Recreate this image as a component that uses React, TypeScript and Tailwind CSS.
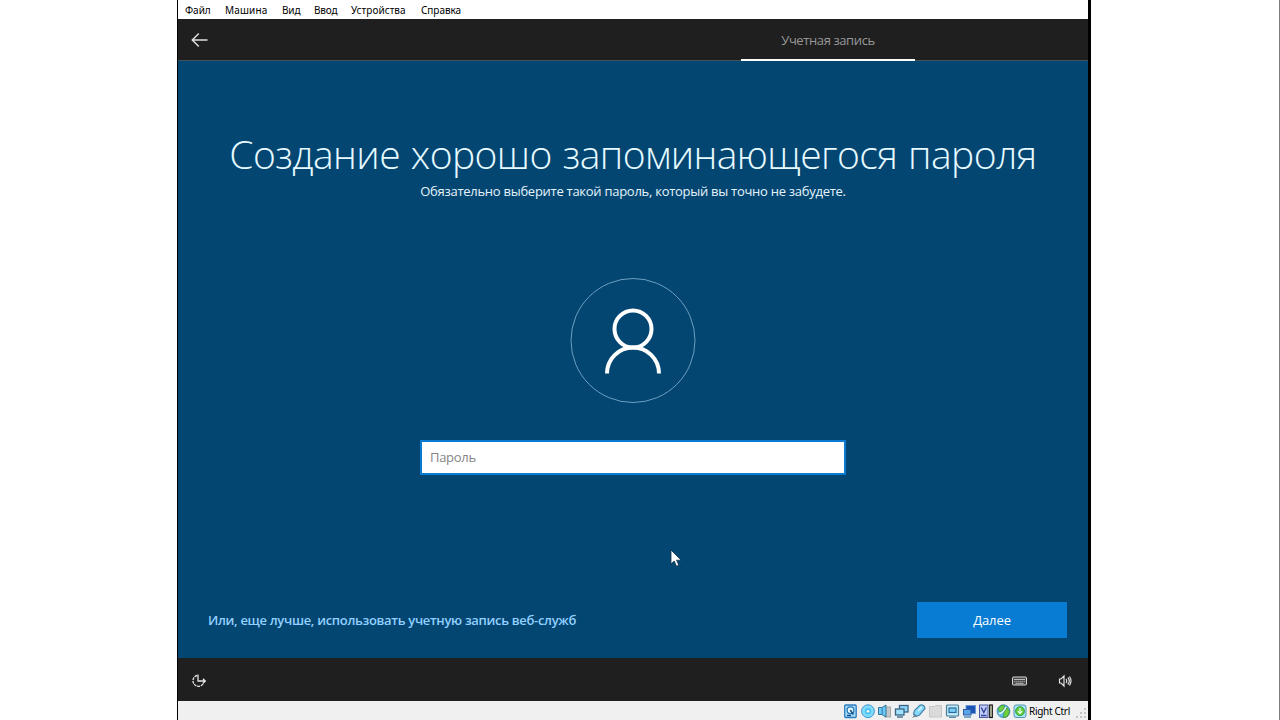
import React from "react";

const menu = [
  { label: "Файл", cls: "ml-[7px] w-[40px] tracking-[-0.05px]" },
  { label: "Машина", cls: "w-[57px] tracking-[0.15px]" },
  { label: "Вид", cls: "w-[32px] tracking-[-0.15px]" },
  { label: "Ввод", cls: "w-[37px] tracking-[-0.15px]" },
  { label: "Устройства", cls: "w-[70px] tracking-[0.05px]" },
  { label: "Справка", cls: "w-[50px] tracking-[-0.05px]" },
];

function StatusIcon({ children }: { children: React.ReactNode }) {
  return (
    <svg className="h-4 w-[17px] shrink-0" viewBox="0 0 17 16" fill="none">
      {children}
    </svg>
  );
}

function StatusBar() {
  return (
    <footer className="flex h-[19px] shrink-0 items-center bg-[#f0f0f0] pl-[664px]">
      <StatusIcon>
        <rect x="2.7" y="2" width="11.5" height="12.5" rx="1" fill="#a6dcf8" stroke="#2b7cc0" strokeWidth="1.3" />
        <circle cx="8.5" cy="7.2" r="3.4" fill="#e5f9ff" stroke="#2478b8" strokeWidth="1.3" />
        <path d="M8.3 7l3 4.5M5 12.5h4" stroke="#184a88" strokeWidth="1.5" />
      </StatusIcon>
      <StatusIcon>
        <circle cx="9" cy="8.2" r="6.4" fill="#7fdcfc" stroke="#4496cc" />
        <circle cx="9" cy="8.2" r="3.2" fill="#4fc0f0" />
        <circle cx="9" cy="8.2" r="1.3" fill="#fff" />
      </StatusIcon>
      <StatusIcon>
        <rect x="9" y="4" width="5.5" height="10" fill="#c4c6c8" stroke="#a8a8a8" />
        <path d="M2.5 4.5h3.5l4-2.500v12l-4-2.500H2.500z" fill="#6cc8f4" stroke="#35769f" />
        <path d="M6.200 5v6.500" stroke="#2e7db0" />
      </StatusIcon>
      <StatusIcon>
        <rect x="6.5" y="2.5" width="8.5" height="6.5" fill="#8fd8fa" stroke="#3a6486" strokeWidth="1.3" />
        <rect x="2.5" y="6" width="8.5" height="6" fill="#9fe2fd" stroke="#3a6486" strokeWidth="1.3" />
        <path d="M4 14h6" stroke="#4c7794" strokeWidth="1.5" />
      </StatusIcon>
      <StatusIcon>
        <path d="M3.500 11l1-3.500 5.500-5.500q4.500-.5 5 3.500L9.500 12 6 13.500z" fill="#84dafb" stroke="#4c86ae" strokeWidth="1.2" />
        <path d="M8 8l4-4" stroke="#e0f7ff" strokeWidth="1.3" />
        <path d="M2 15l3-4 2 2z" fill="#68818f" />
      </StatusIcon>
      <StatusIcon>
        <path d="M2.5 3.5h5l1-1h6V14h-12z" fill="#dadada" stroke="#c6c6c6" />
      </StatusIcon>
      <StatusIcon>
        <rect x="2.5" y="2" width="12" height="11" rx="1" fill="#bfecfd" stroke="#4c7c96" strokeWidth="1.2" />
        <rect x="5" y="5" width="7" height="4.5" fill="#7bcff5" stroke="#286c9c" strokeWidth="1.2" />
        <path d="M5 14.300h7" stroke="#4c829f" strokeWidth="1.2" />
      </StatusIcon>
      <StatusIcon>
        <rect x="5" y="2.5" width="9.5" height="8" fill="#1e54b8" stroke="#6f9bd2" />
        <rect x="2.5" y="6.5" width="7.5" height="5.5" fill="#5aa5ea" stroke="#2b5ca6" />
        <path d="M3 14h7" stroke="#4f91bd" strokeWidth="1.5" />
      </StatusIcon>
      <StatusIcon>
        <rect x="1.5" y="2" width="8.5" height="12.5" fill="#c0ccf6" stroke="#4b58a4" />
        <path d="M3.300 4.500l2.500 5 2.500-5M3 12.500h5.500" stroke="#34429a" strokeWidth="1.4" />
        <rect x="11.7" y="2" width="2.6" height="12.5" fill="#dbe4c0" stroke="#111" strokeWidth="1.2" />
      </StatusIcon>
      <StatusIcon>
        <circle cx="8.5" cy="8.2" r="6.4" fill="#62bcf0" stroke="#4c94b2" />
        <path d="M3 5.500l4-3.500 3 1-2 4-3.500 2zM9 9.500l3-5 2.500 4-2 5-4 1z" fill="#6ed03c" stroke="#398d37" strokeWidth=".7" />
        <path d="M4 10.500q4 0 7-6.500" stroke="#effff0" strokeWidth="1.4" />
      </StatusIcon>
      <StatusIcon>
        <rect x="2" y="2" width="12" height="12.5" rx="2" fill="#a8e4f8" stroke="#5798b1" />
        <circle cx="8" cy="8.2" r="4.4" fill="#5fd03e" stroke="#379c40" />
        <path d="M8 5v5M5.800 8.200L8 10.400l2.200-2.200" stroke="#effff0" strokeWidth="1.2" />
      </StatusIcon>
      <span className="w-[51px] whitespace-nowrap font-['Noto_Sans','Open_Sans',sans-serif] text-[10px] leading-4 tracking-[-0.3px] text-black">
        Right Ctrl
      </span>
      <svg className="mt-1 h-3 w-3 shrink-0" viewBox="0 0 12 12" fill="#c4c4c4">
        <path d="M8 1h2v2H8zM8 5h2v2H8zM4 5h2v2H4zM0 9h2v2H0zM4 9h2v2H4zM8 9h2v2H8z" />
      </svg>
    </footer>
  );
}

export default function App() {
  return (
    <div className="flex h-[720px] w-[1280px] justify-between overflow-hidden border-r border-[#7d7d7d] bg-white font-['Open_Sans','Noto_Sans',sans-serif]">
      <div className="ml-[177px] flex w-[914px] flex-col border-l border-r-[3px] border-black">
        <nav className="flex h-[19px] shrink-0 items-center bg-white font-['Noto_Sans','Open_Sans',sans-serif] text-[10px] leading-4 text-black">
          {menu.map((m) => (
            <span key={m.label} className={`whitespace-nowrap ${m.cls}`}>{m.label}</span>
          ))}
        </nav>

        <header className="flex h-[42px] shrink-0 border-b border-[#42535c] bg-[#1f1f1f]">
          <button className="ml-[12px] mt-[13px] h-4 w-[563px]" aria-label="Назад">
            <svg className="h-4 w-[19px]" viewBox="0 0 19 16" fill="none" stroke="#dedede" strokeWidth="1.5">
              <path d="M17.500 8H2.500M8.800 1.500L2.300 8l6.500 6.500" />
            </svg>
          </button>
          <div className="-mb-px ml-[-12px] flex h-[42px] w-[174px] items-center justify-center border-b-2 border-white pt-[4px] text-[13px] text-[#979797]">
            <span className="whitespace-nowrap tracking-[-0.4px]">Учетная запись</span>
          </div>
        </header>

        <main className="flex min-h-0 flex-1 flex-col items-center bg-[#044672]">
          <h1 className="mt-[65px] h-[56px] whitespace-nowrap text-[39px] font-light leading-[56px] tracking-[-0.58px] [word-spacing:1.3px] text-[#e6faff]">
            Создание хорошо запоминающегося пароля
          </h1>
          <p className="-mt-px h-[20px] whitespace-nowrap text-[13px] leading-[20px] tracking-[-0.27px] text-[#e4f4fc]">
            Обязательно выберите такой пароль, который вы точно не забудете.
          </p>
          <svg className="mt-[76px] h-[126px] w-[126px] shrink-0" viewBox="0 0 126 126" fill="none">
            <circle cx="63" cy="63.5" r="62" stroke="#6c9fc0" />
            <circle cx="63" cy="52" r="18.5" stroke="#fff" strokeWidth="4" />
            <path d="M37 96.500a26 26 0 0 1 52 0" stroke="#fff" strokeWidth="4" />
          </svg>
          <input
            type="text"
            placeholder="Пароль"
            className="mt-[37px] h-[35px] w-[426px] shrink-0 border-2 border-[#0a7bd0] bg-white px-[8px] pb-px text-[13px] tracking-[-0.3px] text-black outline-none placeholder:text-[#858585]"
          />
          <div className="mt-[127px] flex w-full items-center justify-between pl-[30px] pr-[21px]">
            <a className="whitespace-nowrap pt-px text-[13px] font-semibold tracking-[-0.31px] text-[#92d1ff]">
              Или, еще лучше, использовать учетную запись веб-служб
            </a>
            <button className="h-[36px] w-[150px] bg-[#087bd2] pt-px text-[13px] tracking-[-0.1px] text-white">Далее</button>
          </div>
        </main>

        <section className="flex h-[43px] shrink-0 items-center bg-[#1f1f1f] pl-[13px] pt-[2px]">
          <svg className="h-4 w-4" viewBox="0 0 16 16" fill="none" stroke="#e5e5e5" strokeWidth="1.3">
            <path d="M6 2.5a5.5 5.5 0 1 0 6.5 7.5" strokeDasharray="2.8 .8" />
            <path d="M7 1.5V8h7M12 5.8L14.3 8 12 10.2" />
          </svg>
          <svg className="ml-[805px] h-[10px] w-[15px]" viewBox="0 0 15 10" fill="none" stroke="#d8d8d8">
            <rect x=".5" y="1" width="14" height="8" rx="1" fill="#4a4a4a" />
            <path d="M2 3.500h11" stroke="#b8b8b8" />
            <path d="M2 5.500h11" stroke="#8f8f8f" strokeDasharray="1.5 .5" />
            <path d="M3.500 7.300h8" stroke="#b8b8b8" />
          </svg>
          <svg className="ml-[31px] h-[14px] w-[14px]" viewBox="0 0 14 14" fill="none" stroke="#e2e2e2" strokeWidth="1.2">
            <path d="M1.500 5h1.500l3-3v10L3 9H1.500zM8 5q1.5 2 0 4M9.8 3.5q3 3.5 0 7M11.500 2.500q3 4.500 0 9" />
          </svg>
        </section>
        <StatusBar />
      </div>
      <svg className="pointer-events-none absolute left-[670px] top-[549px] h-[19px] w-[12px]" viewBox="0 0 12 19">
        <path d="M1 1v14l3.2-3 2.3 5.2 2.3-1-2.2-5h4.6z" fill="#fff" stroke="#15314a" strokeWidth=".8" />
      </svg>
    </div>
  );
}
